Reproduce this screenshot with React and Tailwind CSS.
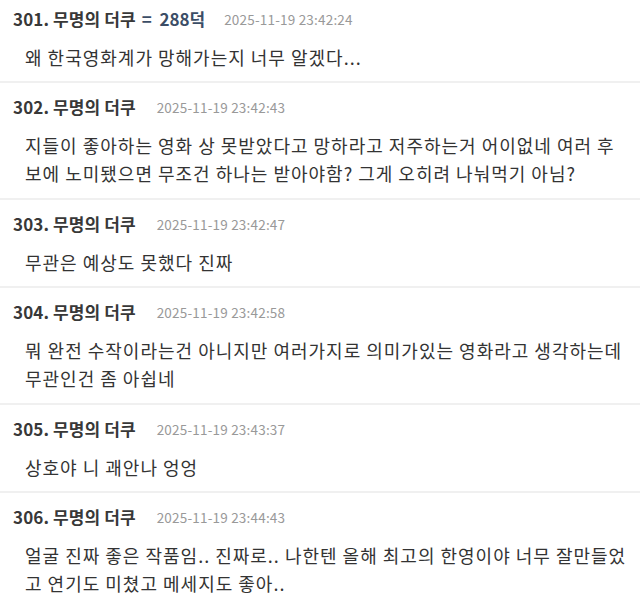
import React from "react";

const items = [
  { no: "301", extra: "= 288덕", date: "2025-11-19 23:42:24", body: "왜 한국영화계가 망해가는지 너무 알겠다..." },
  { no: "302", date: "2025-11-19 23:42:43", body: "지들이 좋아하는 영화 상 못받았다고 망하라고 저주하는거 어이없네 여러 후보에 노미됐으면 무조건 하나는 받아야함? 그게 오히려 나눠먹기 아님?" },
  { no: "303", date: "2025-11-19 23:42:47", body: "무관은 예상도 못했다 진짜" },
  { no: "304", date: "2025-11-19 23:42:58", body: "뭐 완전 수작이라는건 아니지만 여러가지로 의미가있는 영화라고 생각하는데 무관인건 좀 아쉽네" },
  { no: "305", date: "2025-11-19 23:43:37", body: "상호야 니 괘안나 엉엉" },
  { no: "306", date: "2025-11-19 23:44:43", body: "얼굴 진짜 좋은 작품임.. 진짜로.. 나한텐 올해 최고의 한영이야 너무 잘만들었고 연기도 미쳤고 메세지도 좋아.." },
];

export default function App() {
  return (
    <div className="w-[640px] h-[609px] overflow-hidden bg-white font-['Noto_Sans_CJK_KR',sans-serif]">
      <div className="-mt-[5.5px]">
        {items.map((it, i) => (
          <div key={it.no} className={`${i > 0 ? "border-t-2 border-[#f0f0f0]" : ""} pt-[12px] pb-[10.6px] px-[13px]`}>
            <div className="flex items-center h-[24px]">
              <span className="text-[17px] font-bold text-[#383838] leading-[24px] tracking-[0.1px]">{it.no}. 무명의 더쿠</span>
              {it.extra && (
                <span className="ml-[6px] text-[17px] font-bold text-[#3b4d66] leading-[24px] whitespace-pre">{"=  288덕"}</span>
              )}
              <span className={`${it.extra ? "ml-[19px]" : "ml-[21px]"} text-[13.5px] text-[#999] leading-[24px] tracking-[0.2px]`}>{it.date}</span>
            </div>
            <div className="mt-[12px] pl-[12px] text-[18px] leading-[28px] tracking-[1px] text-[#333]">{it.body}</div>
          </div>
        ))}
      </div>
    </div>
  );
}
